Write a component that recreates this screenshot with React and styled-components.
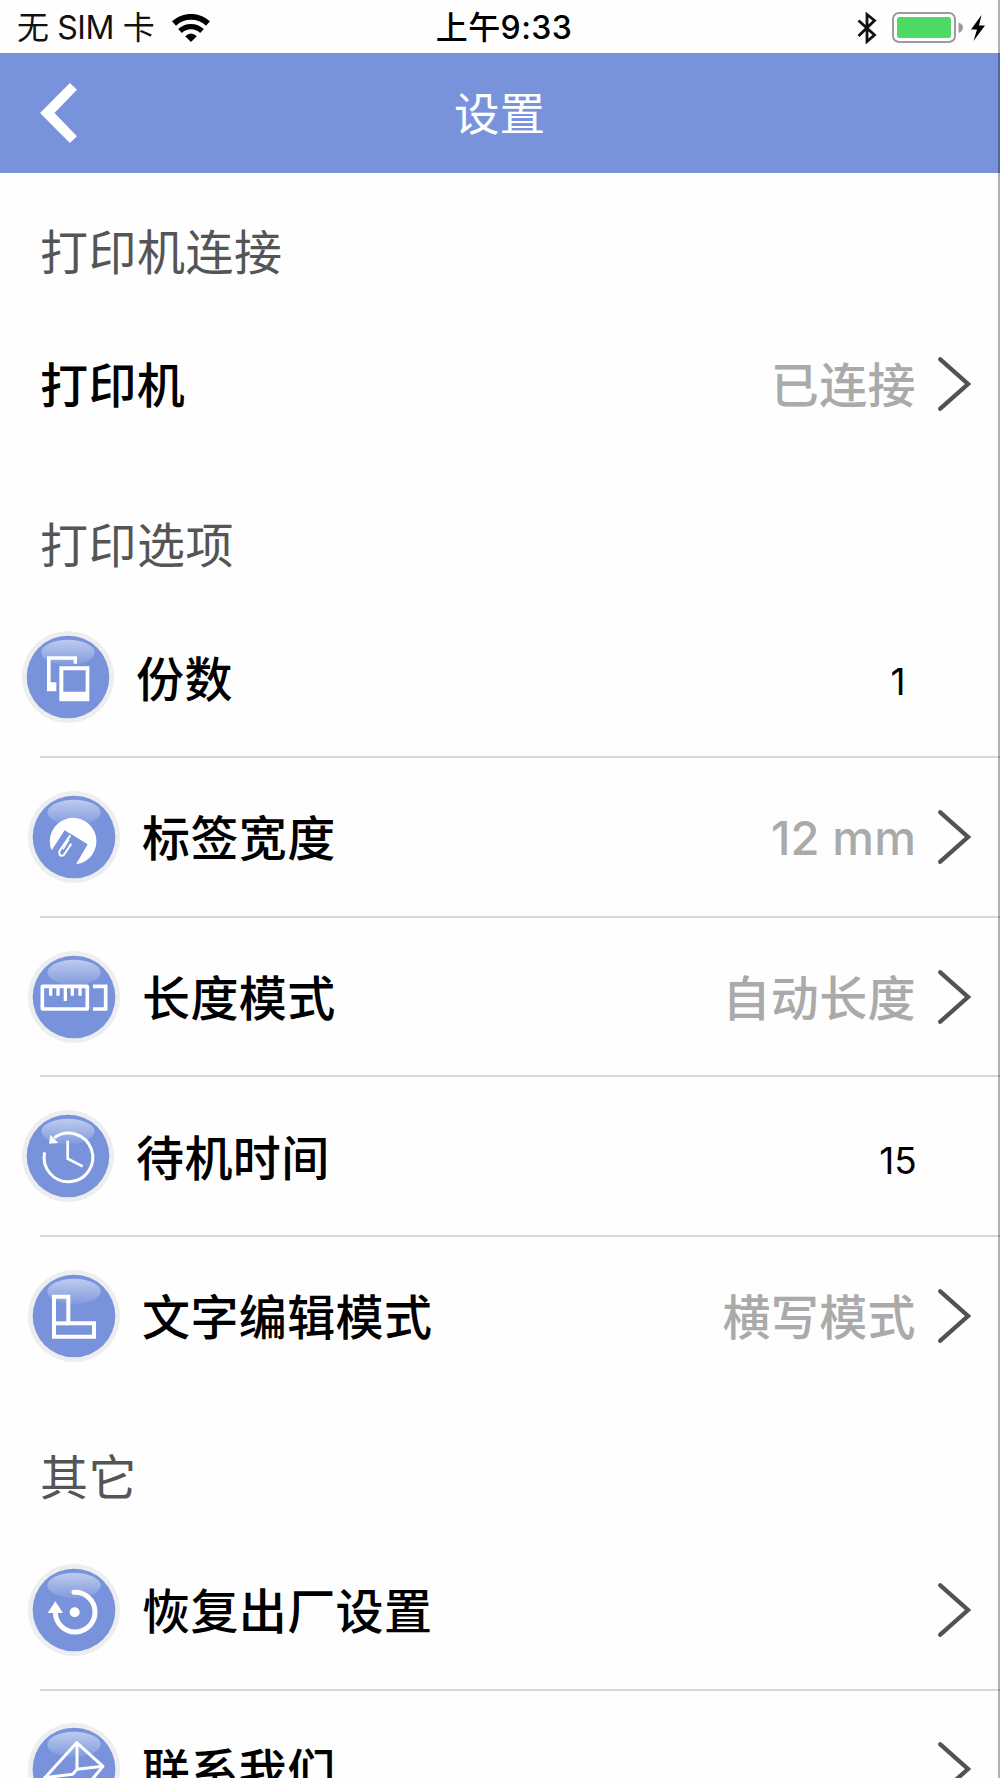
import React from "react";
import styled, { createGlobalStyle } from "styled-components";

const GlobalStyle = createGlobalStyle`
  * {
    box-sizing: border-box;
  }
  body {
    margin: 0;
    background-color: #fefefe;
    font-family: Inter, "Noto Sans CJK SC", sans-serif;
    overflow: hidden;
  }
`;

const CopiesIcon = () => (
  <>
    <path d="M75 76H165V98H155V86H86V154H103V181H75Z" fill="#fff" />
    <path
      d="M112 106H202V211H112ZM124 118V182H191V118Z"
      fill="#fff"
      fillRule="evenodd"
    />
  </>
);

const TapeIcon = () => (
  <>
    <path
      d="M71 178A70 70 0 1 1 144 220L179 160L134 132L124 127L110 118Z"
      fill="#fff"
    />
    <path
      d="M127 133L95 179Q91 192 100 194Q106 195 110 188L130 158"
      fill="none"
      stroke="#fff"
      strokeWidth="6"
    />
    <path
      d="M123 146L105 175"
      fill="none"
      stroke="#fff"
      strokeWidth="4"
    />
  </>
);

const RulerIcon = () => (
  <g fill="none" stroke="#fff">
    <rect x="43" y="106" width="135" height="68" rx="2" strokeWidth="11" />
    <path
      d="M68 108V134M90 108V134M112 108V150M133 108V134M156 108V134"
      strokeWidth="10"
    />
    <path d="M195 106H233V174H195" strokeWidth="11" />
  </g>
);

const ClockIcon = () => (
  <>
    <path
      d="M68 127A73 73 0 1 0 97 83"
      fill="none"
      stroke="#fff"
      strokeWidth="9"
    />
    <path d="M85 74L81 101L109 99Z" fill="#fff" />
    <path
      d="M137 92V146L182 169"
      fill="none"
      stroke="#fff"
      strokeWidth="8"
    />
  </>
);

const TextModeIcon = () => (
  <g fill="none" stroke="#fff" strokeWidth="12">
    <path d="M78 80H121V160H198V200H78Z" />
    <path d="M78 160H121" />
  </g>
);

const ResetIcon = () => (
  <>
    <path
      d="M138 85A59.500 59.500 0 1 1 82 146"
      fill="none"
      stroke="#fff"
      strokeWidth="15"
      strokeLinecap="round"
    />
    <path d="M82 112L59 147H105Z" fill="#fff" />
    <circle cx="140" cy="145" r="15" fill="#fff" />
  </>
);

const ContactIcon = () => (
  <g fill="none" stroke="#fff" strokeWidth="9" strokeLinejoin="round">
    <path d="M146 59L225 130L170 196L40 176Z" />
    <path d="M147 60V139L225 130M147 139L134 154L48 164" />
  </g>
);

const options = [
  { label: "份数", icon: CopiesIcon, number: "1" },
  { label: "标签宽度", icon: TapeIcon, value: "12 mm", latin: true },
  { label: "长度模式", icon: RulerIcon, value: "自动长度" },
  { label: "待机时间", icon: ClockIcon, number: "15" },
  { label: "文字编辑模式", icon: TextModeIcon, value: "横写模式" },
];

const others = [
  { label: "恢复出厂设置", icon: ResetIcon },
  { label: "联系我们", icon: ContactIcon },
];

function RoundIcon({ icon: Glyph }) {
  return (
    <Round viewBox="0 0 276 276">
      <defs>
        <linearGradient id="gloss" x1="0" y1="0" x2="0" y2="1">
          <stop offset="0" stopColor="#fff" stopOpacity="0.52" />
          <stop offset="1" stopColor="#fff" stopOpacity="0.08" />
        </linearGradient>
      </defs>
      <circle cx="138" cy="138" r="138" fill="#eeeeee" />
      <circle cx="138" cy="138" r="124" fill="#7893dc" />
      <ellipse cx="138" cy="64" rx="80" ry="38" fill="url(#gloss)" />
      <Glyph />
    </Round>
  );
}

function Arrow() {
  return (
    <RowArrow viewBox="0 0 34 56">
      <path
        d="M3.300 3.300L31 28L3.300 52.700"
        fill="none"
        stroke="#525252"
        strokeWidth="4.300"
        strokeLinecap="round"
      />
    </RowArrow>
  );
}

function SettingRow({ item }) {
  return (
    <Row $inset={item.number ? 22 : 28} $drop={2}>
      <RoundIcon icon={item.icon} />
      <RowLabel $gap={22}>{item.label}</RowLabel>
      {item.number ? (
        <RowNumber>{item.number}</RowNumber>
      ) : (
        <>
          <RowValue $latin={item.latin}>{item.value}</RowValue>
          <Arrow />
        </>
      )}
    </Row>
  );
}

export default function App() {
  return (
    <Screen>
      <GlobalStyle />
      <StatusBar>
        <Carrier>
          无 SIM 卡
          <Wifi viewBox="0 0 38 28">
            <g fill="none" stroke="#000">
              <path d="M2 9.500A25 25 0 0 1 36 9.500" strokeWidth="5.800" />
              <path d="M8 17A16 16 0 0 1 30 17" strokeWidth="5.400" />
            </g>
            <path d="M13.200 22.300Q19 16.500 24.800 22.300L19 28Z" />
          </Wifi>
        </Carrier>
        <Time>上午9:33</Time>
        <StatusIcons>
          <Bluetooth viewBox="0 0 20 32">
            <path
              d="M1.500 8.500L17.500 23L10 29.500V2.500L17.500 8.500L1.500 24"
              fill="none"
              stroke="#111"
              strokeWidth="2.800"
            />
          </Bluetooth>
          <Battery viewBox="0 0 72 32">
            <rect
              x="1"
              y="1"
              width="62"
              height="29"
              rx="6"
              fill="none"
              stroke="#9b9b9b"
              strokeWidth="2"
            />
            <rect x="5" y="5" width="54" height="21" rx="2.500" fill="#4cd964" />
            <path d="M66.500 10.500Q71 12 71 15.500T66.500 21Z" fill="#9b9b9b" />
          </Battery>
          <Bolt viewBox="0 0 16 26">
            <path d="M11.500 0L1 14.500H7L3.500 26L15 10.500H9Z" />
          </Bolt>
        </StatusIcons>
      </StatusBar>

      <NavBar>
        <BackArrow viewBox="0 0 110 179">
          <path d="M0 89.500L89 0L110 20L43 89.500L110 159L89 179Z" fill="#fff" />
        </BackArrow>
        <NavTitle>设置</NavTitle>
        <span />
      </NavBar>

      <SectionTitle $height={131} $top={48}>
        打印机连接
      </SectionTitle>
      <Row $inset={40} $drop={0}>
        <RowLabel $gap={0}>打印机</RowLabel>
        <RowValue>已连接</RowValue>
        <Arrow />
      </Row>

      <SectionTitle $height={133} $top={50}>
        打印选项
      </SectionTitle>
      <RowList>
        {options.map((item) => (
          <SettingRow key={item.label} item={item} />
        ))}
      </RowList>

      <SectionTitle $height={134.5} $top={51}>
        其它
      </SectionTitle>
      <RowList>
        {others.map((item) => (
          <SettingRow key={item.label} item={item} />
        ))}
      </RowList>
      <ScreenEdge />
    </Screen>
  );
}

const Screen = styled.div`
  position: relative;
  width: 1000px;
  height: 1778px;
  overflow: hidden;
  display: flex;
  flex-direction: column;
  > * {
    flex-shrink: 0;
  }
`;

const StatusBar = styled.div`
  height: 53.4px;
  display: grid;
  grid-template-columns: 1fr auto 1fr;
  align-items: center;
  padding: 1px 14px 0 17px;
  font-size: 32px;
  line-height: 52px;
  color: #111;
`;
const Carrier = styled.div`
  display: flex;
  align-items: center;
  letter-spacing: -0.4px;
`;
const Wifi = styled.svg`
  width: 38px;
  height: 28px;
  margin-left: 18px;
`;
const Time = styled.div`
  padding-top: 1px;
  padding-left: 5px;
  font-weight: 500;
  letter-spacing: 0.4px;
  color: #000;
`;
const StatusIcons = styled.div`
  display: flex;
  align-items: center;
  justify-content: flex-end;
`;
const Bluetooth = styled.svg`
  width: 20px;
  height: 32px;
  margin-right: 15px;
`;
const Battery = styled.svg`
  width: 72px;
  height: 32px;
`;
const Bolt = styled.svg`
  width: 16px;
  height: 26px;
  margin-left: 6px;
`;

const NavBar = styled.div`
  height: 119.6px;
  background-color: #7893dc;
  display: grid;
  grid-template-columns: 1fr auto 1fr;
  align-items: center;
  padding: 0 41px 0 40px;
`;
const BackArrow = styled.svg`
  width: 37px;
  height: 60px;
`;
const NavTitle = styled.div`
  padding-top: 4px;
  font-size: 45.5px;
  line-height: 60px;
  color: #fff;
`;

const SectionTitle = styled.div`
  height: ${(props) => props.$height}px;
  padding: ${(props) => props.$top}px 0 0 40px;
  font-size: 48px;
  line-height: 64px;
  letter-spacing: 0.5px;
  color: #555;
`;

const RowList = styled.div`
  > * + * {
    background: linear-gradient(#d8d8da, #d8d8da) 40px 0 / 100% 2px no-repeat;
  }
`;
const Row = styled.div`
  height: 159.6px;
  display: flex;
  align-items: center;
  padding: ${(props) => props.$drop}px 29px 0 ${(props) => props.$inset}px;
`;
const Round = styled.svg`
  width: 92px;
  height: 92px;
  flex-shrink: 0;
`;
const RowLabel = styled.div`
  flex: 1;
  margin-left: ${(props) => props.$gap}px;
  padding-top: 5px;
  font-size: 48px;
  line-height: 64px;
  font-weight: 500;
  letter-spacing: 0.4px;
  color: #000;
`;
const RowValue = styled.div`
  padding-top: ${(props) => (props.$latin ? 2 : 4)}px;
  font-size: ${(props) => (props.$latin ? 47 : 48)}px;
  line-height: 64px;
  font-weight: 500;
  letter-spacing: ${(props) => (props.$latin ? 0.1 : 0.4)}px;
  color: #aaa;
`;
const RowNumber = styled.div`
  width: 100px;
  margin-right: 23px;
  padding-top: 10px;
  font-size: 37px;
  line-height: 48px;
  text-align: center;
  color: #000;
`;
const RowArrow = styled.svg`
  width: 34px;
  height: 56px;
  margin-left: 21px;
`;

/* thin shade along the right border of the screen */
const ScreenEdge = styled.div`
  position: absolute;
  top: 0;
  right: 0;
  width: 2px;
  height: 100%;
  background-color: rgba(0, 0, 0, 0.3);
`;
